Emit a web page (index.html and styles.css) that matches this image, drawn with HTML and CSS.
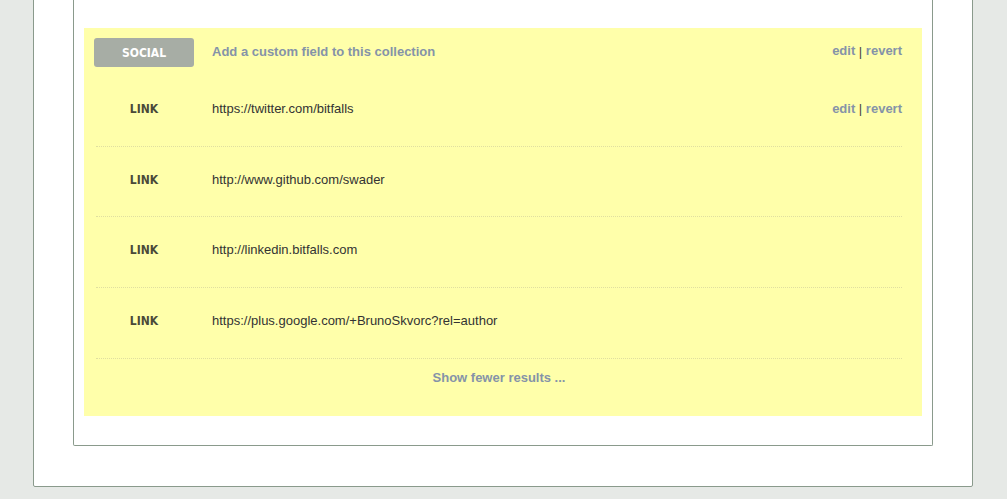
FILE: index.html
```html
<!DOCTYPE html>
<html>
<head>
<meta charset="utf-8">
<link rel="stylesheet" href="styles.css">
</head>
<body>
<div class="outer">
  <div class="inner">
    <div class="collection">
      <div class="head">
        <div class="badge">SOCIAL</div>
        <a class="add" href="#">Add a custom field to this collection</a>
        <div class="actions"><a href="#">edit</a> | <a href="#">revert</a></div>
      </div>
      <div class="rows">
        <div class="row">
          <div class="label">LINK</div>
          <div class="value">https://twitter.com/bitfalls</div>
          <div class="actions"><a href="#">edit</a> | <a href="#">revert</a></div>
        </div>
        <div class="row">
          <div class="label">LINK</div>
          <div class="value">http://www.github.com/swader</div>
        </div>
        <div class="row">
          <div class="label">LINK</div>
          <div class="value">http://linkedin.bitfalls.com</div>
        </div>
        <div class="row">
          <div class="label">LINK</div>
          <div class="value">https://plus.google.com/+BrunoSkvorc?rel=author</div>
        </div>
        <div class="more"><a href="#">Show fewer results ...</a></div>
      </div>
    </div>
  </div>
</div>
</body>
</html>
```

FILE: styles.css
```css
html, body {
  margin: 0;
  padding: 0;
  background: #e6e9e6;
  font-family: "Liberation Sans", Arial, sans-serif;
  font-size: 12px;
  color: #333;
}
.outer {
  margin: -21px 0 0 33px;
  width: 940px;
  box-sizing: border-box;
  background: #fff;
  border: 1px solid #8a9a8c;
  border-radius: 2px;
  padding: 20px 39px 40px 39px;
}
.inner {
  border: 1px solid #8a9a8c;
  border-top: none;
  border-radius: 0 0 2px 2px;
  padding: 28px 10px 29px 10px;
}
.collection {
  background: #ffffaa;
  padding: 10px 20px 30px 10px;
}
.head {
  display: flex;
  align-items: center;
  height: 29px;
  margin-bottom: 9px;
}
a {
  color: #8593a8;
  font-weight: bold;
  text-decoration: none;
  font-size: 13px;
}
.head a, .head .actions {
  position: relative;
  top: -1px;
}
.badge {
  width: 100px;
  height: 29px;
  box-sizing: border-box;
  background: #a7ada5;
  border-radius: 3px;
  color: #fff;
  font-family: "DejaVu Sans Condensed", "DejaVu Sans", sans-serif;
  font-stretch: condensed;
  font-weight: bold;
  font-size: 12px;
  display: flex;
  align-items: center;
  justify-content: center;
  flex: none;
}
.add {
  margin-left: 18px;
  flex: 1;
}
.actions {
  color: #444;
  font-size: 13px;
}
.rows {
  margin-left: 2px;
}
.row {
  display: flex;
  align-items: center;
  padding: 25px 0 29px;
  line-height: 16px;
  border-bottom: 1px dotted #e0dfa0;
}
.row:nth-child(2) {
  padding-bottom: 28px;
}
.label {
  width: 96px;
  text-align: center;
  flex: none;
  font-family: "DejaVu Sans Condensed", "DejaVu Sans", sans-serif;
  font-stretch: condensed;
  font-weight: bold;
  font-size: 12px;
  color: #4a4a38;
}
.value {
  margin-left: 20px;
  flex: 1;
  font-size: 13px;
  color: #333;
}
.more {
  text-align: center;
  padding-top: 11px;
  line-height: 16px;
}
```
